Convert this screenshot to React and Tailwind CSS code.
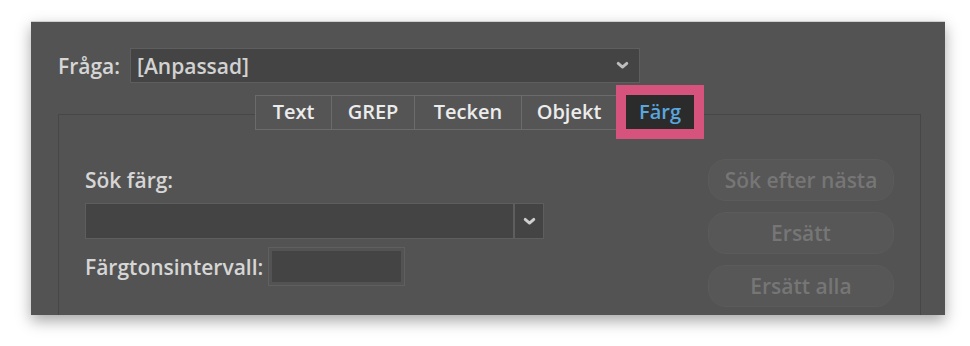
import React from 'react';

const font = { fontFamily: '"Open Sans", "Liberation Sans", sans-serif' };

function Chevron({ className }) {
  return (
    <svg viewBox="0 0 12 8" className={className} fill="none">
      <path d="M2 2l4 3.5L10 2" stroke="currentColor" strokeWidth="2.6" strokeLinecap="round" strokeLinejoin="round" />
    </svg>
  );
}

const tabs = ['Text', 'GREP', 'Tecken', 'Objekt'];

export default function App() {
  return (
    <div className="w-[970px] h-[346px] bg-white overflow-hidden" style={font}>
      <div className="ml-[31px] mt-[21px] w-[914px] h-[294px] bg-[#535353] border-t border-[#cfcfcf] shadow-[0_6px_14px_rgba(0,0,0,0.35)] overflow-hidden">
        {/* query row */}
        <div className="flex items-center pl-[27px] pt-[26px]">
          <span className="text-[21px] leading-[24px] font-semibold text-[#d6d6d6] w-[72px]">Fråga:</span>
          <div className="w-[510px] h-[35px] bg-[#444444] border border-[#5e5e5e] flex items-center pl-[6px] pr-[10px]">
            <span className="text-[21px] leading-[24px] font-semibold text-[#d2d2d2]">[Anpassad]</span>
            <Chevron className="ml-auto w-[13px] h-[9px] text-[#bdbdbd]" />
          </div>
        </div>

        {/* tabs */}
        <div className="relative z-10 flex items-center ml-[224px] mt-[2px] h-[54px]">
          {tabs.map((t, i) => (
            <div
              key={t}
              className={`h-[35px] flex items-center justify-center bg-[#555555] border-y border-[#6b6b6b] ${i === 0 ? 'border-l' : ''} border-r text-[20px] leading-[24px] font-semibold text-[#ececec] ${
                ['w-[77px]', 'w-[83px]', 'w-[107px]', 'w-[95px]'][i]
              }`}
            >
              {t}
            </div>
          ))}
          <div className="h-[54px] w-[88px] bg-[#d6537e] flex items-center justify-center -ml-[1px]">
            <div className="w-[68px] h-[34px] bg-[#2b2b2b] flex items-center justify-center text-[20px] leading-[24px] font-semibold text-[#5aa6de]">
              Färg
            </div>
          </div>
        </div>

        {/* group box */}
        <div className="ml-[27px] mr-[24px] -mt-[25px] h-[240px] border-t border-l border-r border-[#474747] flex">
          <div className="pl-[26px] pt-[54px] flex flex-col">
            <span className="text-[21px] leading-[22px] font-semibold text-[#d6d6d6]">Sök färg:</span>
            <div className="mt-[12px] flex h-[36px]">
              <div className="w-[429px] bg-[#444444] border border-[#5e5e5e]" />
              <div className="w-[30px] bg-[#444444] border border-[#5e5e5e] flex items-center justify-center">
                <Chevron className="w-[13px] h-[9px] text-[#cfcfcf]" />
              </div>
            </div>
            <div className="mt-[8px] flex items-center">
              <span className="text-[21px] leading-[24px] font-semibold text-[#d6d6d6] w-[183px]">Färgtonsintervall:</span>
              <div className="w-[137px] h-[39px] border border-[#5f5f5f] p-[3px]">
                <div className="w-full h-full bg-[#444444]" />
              </div>
            </div>
          </div>
          <div className="ml-auto mr-[26px] pt-[44px] flex flex-col gap-[11px]">
            {['Sök efter nästa', 'Ersätt', 'Ersätt alla'].map((b) => (
              <div
                key={b}
                className="w-[186px] h-[42px] rounded-[18px] bg-[#575757] border border-[#5b5b5b] flex items-center justify-center text-[21px] leading-[24px] font-semibold text-[#767676]"
              >
                {b}
              </div>
            ))}
          </div>
        </div>
      </div>
    </div>
  );
}
